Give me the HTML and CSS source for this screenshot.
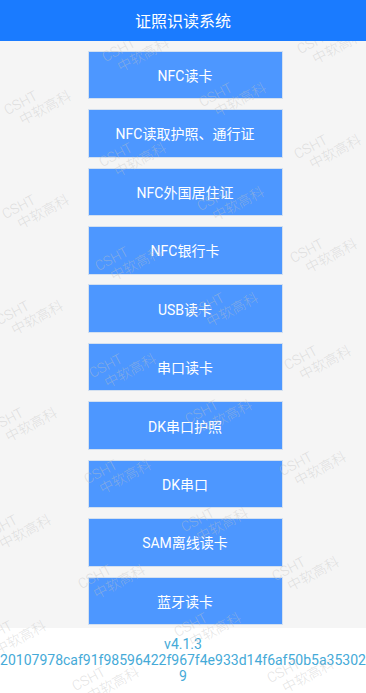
FILE: index.html
```html
<!DOCTYPE html>
<html lang="zh-CN">
<head>
<meta charset="utf-8">
<title>证照识读系统</title>
<link rel="stylesheet" href="styles.css">
</head>
<body>
<div class="page">
  <header class="topbar">证照识读系统</header>
  <div class="content">
    <div class="list">
      <div class="btn">NFC读卡</div>
      <div class="btn">NFC读取护照、通行证</div>
      <div class="btn">NFC外国居住证</div>
      <div class="btn">NFC银行卡</div>
      <div class="btn">USB读卡</div>
      <div class="btn">串口读卡</div>
      <div class="btn">DK串口护照</div>
      <div class="btn">DK串口</div>
      <div class="btn">SAM离线读卡</div>
      <div class="btn">蓝牙读卡</div>
    </div>
    <footer class="footer">
      <div>v4.1.3</div>
      <div class="hash">20107978caf91f98596422f967f4e933d14f6af50b5a353029</div>
    </footer>
    <div class="wm-layer">
      <div class="wm" style="left:103px;top:-7px"><span>CSHT</span><span class="l2">中软高科</span></div>
      <div class="wm" style="left:298px;top:-15px"><span>CSHT</span><span class="l2">中软高科</span></div>
      <div class="wm" style="left:5px;top:46px"><span>CSHT</span><span class="l2">中软高科</span></div>
      <div class="wm" style="left:200px;top:38px"><span>CSHT</span><span class="l2">中软高科</span></div>
      <div class="wm" style="left:100px;top:98px"><span>CSHT</span><span class="l2">中软高科</span></div>
      <div class="wm" style="left:295px;top:90px"><span>CSHT</span><span class="l2">中软高科</span></div>
      <div class="wm" style="left:3px;top:150px"><span>CSHT</span><span class="l2">中软高科</span></div>
      <div class="wm" style="left:198px;top:142px"><span>CSHT</span><span class="l2">中软高科</span></div>
      <div class="wm" style="left:96px;top:202px"><span>CSHT</span><span class="l2">中软高科</span></div>
      <div class="wm" style="left:291px;top:194px"><span>CSHT</span><span class="l2">中软高科</span></div>
      <div class="wm" style="left:-3px;top:256px"><span>CSHT</span><span class="l2">中软高科</span></div>
      <div class="wm" style="left:192px;top:248px"><span>CSHT</span><span class="l2">中软高科</span></div>
      <div class="wm" style="left:90px;top:309px"><span>CSHT</span><span class="l2">中软高科</span></div>
      <div class="wm" style="left:285px;top:301px"><span>CSHT</span><span class="l2">中软高科</span></div>
      <div class="wm" style="left:-9px;top:363px"><span>CSHT</span><span class="l2">中软高科</span></div>
      <div class="wm" style="left:186px;top:355px"><span>CSHT</span><span class="l2">中软高科</span></div>
      <div class="wm" style="left:85px;top:415px"><span>CSHT</span><span class="l2">中软高科</span></div>
      <div class="wm" style="left:280px;top:407px"><span>CSHT</span><span class="l2">中软高科</span></div>
      <div class="wm" style="left:-15px;top:470px"><span>CSHT</span><span class="l2">中软高科</span></div>
      <div class="wm" style="left:182px;top:463px"><span>CSHT</span><span class="l2">中软高科</span></div>
      <div class="wm" style="left:79px;top:520px"><span>CSHT</span><span class="l2">中软高科</span></div>
      <div class="wm" style="left:273px;top:512px"><span>CSHT</span><span class="l2">中软高科</span></div>
      <div class="wm" style="left:-20px;top:576px"><span>CSHT</span><span class="l2">中软高科</span></div>
      <div class="wm" style="left:175px;top:568px"><span>CSHT</span><span class="l2">中软高科</span></div>
      <div class="wm" style="left:73px;top:622px"><span>CSHT</span><span class="l2">中软高科</span></div>
      <div class="wm" style="left:268px;top:614px"><span>CSHT</span><span class="l2">中软高科</span></div>
    </div>
  </div>
</div>
</body>
</html>
```
FILE: styles.css
```css
html, body {
  margin: 0;
  padding: 0;
}
body {
  font-family: Roboto, "Noto Sans CJK SC", sans-serif;
  background: #f5f5f5;
}
.page {
  width: 366px;
  height: 693px;
  display: flex;
  flex-direction: column;
  overflow: hidden;
}
.topbar {
  flex: none;
  height: 41px;
  background: #1a7bff;
  color: #ffffff;
  font-size: 16px;
  display: flex;
  align-items: center;
  justify-content: center;
  padding-bottom: 2px;
  box-sizing: border-box;
  position: relative;
  z-index: 2;
}
.content {
  flex: 1;
  position: relative;
  display: flex;
  flex-direction: column;
  overflow: hidden;
}
.list {
  flex: 1;
  display: flex;
  flex-direction: column;
  gap: 9.94px;
  padding-top: 9.7px;
}
.btn {
  margin-left: 87.5px;
  width: 195px;
  height: 48.5px;
  box-sizing: border-box;
  background: #4d97ff;
  border: 1px solid #d3e0f0;
  color: #ffffff;
  font-size: 14px;
  display: flex;
  align-items: center;
  justify-content: center;
}
.footer {
  flex: none;
  background: #ffffff;
  color: #45aad8;
  font-size: 14px;
  line-height: 16px;
  text-align: center;
  padding: 8px 0 9px;
}
.hash {
  word-break: break-all;
}
.wm-layer {
  position: absolute;
  inset: 0;
  pointer-events: none;
}
.wm {
  position: absolute;
  width: 64px;
  height: 32px;
  display: flex;
  flex-direction: column;
  font-size: 14px;
  font-weight: 300;
  line-height: 16px;
  color: rgba(194, 194, 194, 0.45);
  transform: rotate(-28deg);
  white-space: nowrap;
}
.wm .l2 {
  padding-left: 9px;
}
```
